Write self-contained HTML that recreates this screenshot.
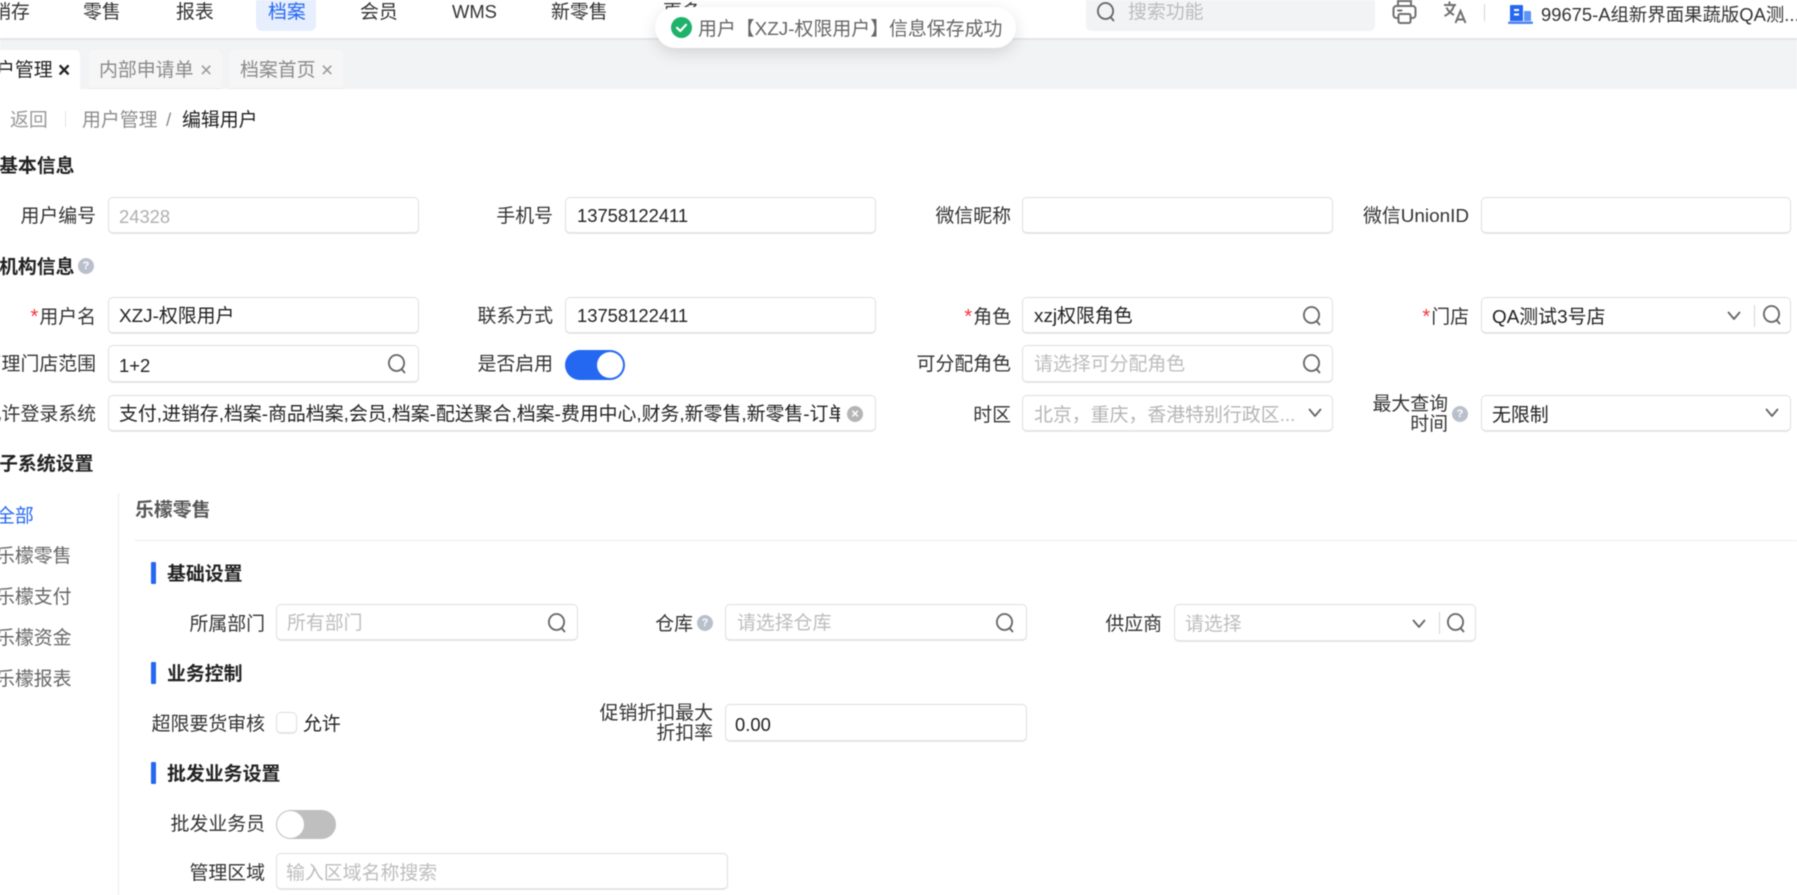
<!DOCTYPE html>
<html lang="zh"><head><meta charset="utf-8"><title>编辑用户</title>
<style>
html,body{margin:0;padding:0;background:#fff}
#p{position:relative;width:1797px;height:895px;overflow:hidden;background:#fff;font-family:"Liberation Sans","Noto Sans CJK SC",sans-serif;font-size:18.9px;color:#333;filter:blur(.4px)}
#p *{box-sizing:border-box}
.t{position:absolute;line-height:24px;height:24px;white-space:nowrap;margin-top:1px}
.r{text-align:right}
.n{font-size:18.4px;margin-top:0}
.g{color:#666}.ph{color:#bdbdbd}.b{font-weight:700;color:#222}.nav{color:#333}
.i{position:absolute;background:#fff;border:1px solid #dfdfdf;border-bottom:2px solid #e4e4e4;border-radius:5px}
.bar{position:absolute;left:151px;width:5px;background:#2468f2;border-radius:1px}
.ln{position:absolute;background:#ececec}
.s{position:absolute;width:20px;height:22px;overflow:visible}
.c{position:absolute;width:14px;height:10px;overflow:visible}
.q{position:absolute;width:16px;height:16px;border-radius:50%;background:#b9c0cc;color:#fff;font-size:11px;line-height:16px;text-align:center;font-weight:700}
.star{color:#f5333f;margin-right:1px;font-size:20px}
.tab{position:absolute;top:50px;height:39px;border-radius:5px 5px 0 0;background:#f6f6f7;border-bottom:1px solid #e9e9e9}
</style></head><body><div id="p">
<svg width="0" height="0" style="position:absolute"><defs>
<symbol id="sr" viewBox="0 0 20 22"><ellipse cx="9.500" cy="10" rx="7.600" ry="8" fill="none" stroke="#666" stroke-width="1.800"/><path d="M14.500 16L17.500 19.500" stroke="#666" stroke-width="1.800" stroke-linecap="round"/></symbol>
<symbol id="ch" viewBox="0 0 14 10"><path d="M1.500 1.500L7 8L12.500 1.500" fill="none" stroke="#666" stroke-width="1.800" stroke-linecap="round" stroke-linejoin="round"/></symbol>
</defs></svg>

<!-- header -->
<div style="position:absolute;left:0;top:0;width:1797px;height:40px;background:#fff;border-bottom:2px solid #e4e5e7"></div>
<div class="t nav" style="left:-8px;top:0">销存</div>
<div class="t nav" style="left:83px;top:0">零售</div>
<div class="t nav" style="left:176px;top:0">报表</div>
<div style="position:absolute;left:256px;top:-6px;width:60px;height:37px;background:#e7eefd;border-radius:6px"></div>
<div class="t" style="left:268px;top:0;color:#2468f2">档案</div>
<div class="t nav" style="left:360px;top:0">会员</div>
<div class="t nav n" style="left:452px;top:0">WMS</div>
<div class="t nav" style="left:551px;top:0">新零售</div>
<div class="t nav" style="left:663px;top:0">更多</div>
<div style="position:absolute;left:1086px;top:-4px;width:289px;height:35px;background:#f2f3f5;border-radius:5px"></div>
<svg class="s" style="left:1096px;top:1px"><use href="#sr"/></svg>
<div class="t ph" style="left:1128px;top:0">搜索功能</div>
<svg style="position:absolute;left:1392px;top:0;width:25px;height:24px" viewBox="0 0 25 24" fill="none" stroke="#707070" stroke-width="2"><path d="M6 6V1H19V6"/><rect x="1.500" y="6" width="22" height="12" rx="3"/><rect x="6.500" y="14" width="12" height="9" rx="1.500" fill="#fff"/><path d="M6 10.500H9.500" stroke-linecap="round"/></svg>
<svg style="position:absolute;left:1443px;top:1px;width:24px;height:23px" viewBox="0 0 24 23" fill="none" stroke="#707070" stroke-width="2"><path d="M1 4H13M6.500 0.500V4M11 4C10 9 6 13 1.500 15M3.500 6.500C5 10 8 12.500 11 14"/><path d="M12.500 22L17.500 10L22.500 22M14 18.500H21"/></svg>
<div style="position:absolute;left:1484px;top:4px;width:1px;height:17px;background:#d5d5d5"></div>
<svg style="position:absolute;left:1508px;top:5px;width:25px;height:19px" viewBox="0 0 25 19"><path d="M3 0H14Q15 0 15 1V16H2V1Q2 0 3 0Z" fill="#2468f2"/><path d="M16 6H22Q23 6 23 7V16H16Z" fill="#5f93f5"/><rect x="0" y="16.500" width="25" height="2.500" rx="1" fill="#4f86f4"/><rect x="6" y="4" width="5" height="2" fill="#fff"/><rect x="6" y="8.500" width="5" height="2" fill="#fff"/></svg>
<div class="t n" style="left:1541px;top:3px">99675-A组新界面果蔬版QA测...</div>

<!-- tabs bar -->
<div style="position:absolute;left:0;top:40px;width:1797px;height:49px;background:#f2f3f5"></div>
<div class="tab" style="left:-10px;width:90px;background:#fff;border-bottom:none"></div>
<div class="t" style="left:-4px;top:58px;color:#222">户管理</div>
<div class="t" style="left:58px;top:58px;color:#222;font-size:21px;font-weight:700">×</div>
<div class="tab" style="left:89px;width:133px"></div>
<div class="t" style="left:99px;top:58px;color:#8a8a8a">内部申请单</div>
<div class="t" style="left:200px;top:58px;color:#999;font-size:21px">×</div>
<div class="tab" style="left:230px;width:113px"></div>
<div class="t" style="left:240px;top:58px;color:#8a8a8a">档案首页</div>
<div class="t" style="left:321px;top:58px;color:#999;font-size:21px">×</div>

<!-- breadcrumb -->
<div class="t" style="left:10px;top:108px;color:#999">返回</div>
<div style="position:absolute;left:65px;top:111px;width:1px;height:16px;background:#e3e3e3"></div>
<div class="t" style="left:82px;top:108px;color:#8c8c8c">用户管理</div>
<div class="t" style="left:166px;top:108px;color:#8c8c8c">/</div>
<div class="t" style="left:182px;top:108px;color:#222">编辑用户</div>

<!-- 基本信息 -->
<div class="t b" style="left:-1px;top:154px">基本信息</div>
<div class="t r" style="right:1701px;top:204px">用户编号</div>
<div class="i" style="left:108px;top:197px;width:311px;height:37px"></div>
<div class="t n" style="left:119px;top:205px;color:#b0b0b0">24328</div>
<div class="t r" style="right:1244px;top:204px">手机号</div>
<div class="i" style="left:565px;top:197px;width:311px;height:37px"></div>
<div class="t n" style="left:577px;top:204px;color:#222">13758122411</div>
<div class="t r" style="right:786px;top:204px">微信昵称</div>
<div class="i" style="left:1022px;top:197px;width:311px;height:37px"></div>
<div class="t r" style="right:328px;top:204px">微信UnionID</div>
<div class="i" style="left:1481px;top:197px;width:310px;height:37px"></div>

<!-- 机构信息 -->
<div class="t b" style="left:-1px;top:255px">机构信息</div>
<div class="q" style="left:78px;top:258px">?</div>

<div class="t r" style="right:1701px;top:304px"><span class="star">*</span>用户名</div>
<div class="i" style="left:108px;top:297px;width:311px;height:37px"></div>
<div class="t" style="left:119px;top:304px;color:#222">XZJ-权限用户</div>
<div class="t r" style="right:1244px;top:304px">联系方式</div>
<div class="i" style="left:565px;top:297px;width:311px;height:37px"></div>
<div class="t n" style="left:577px;top:304px;color:#222">13758122411</div>
<div class="t r" style="right:786px;top:304px"><span class="star">*</span>角色</div>
<div class="i" style="left:1022px;top:297px;width:311px;height:37px"></div>
<div class="t" style="left:1034px;top:304px;color:#222">xzj权限角色</div>
<svg class="s" style="left:1302px;top:305px"><use href="#sr"/></svg>
<div class="t r" style="right:328px;top:304px"><span class="star">*</span>门店</div>
<div class="i" style="left:1481px;top:297px;width:310px;height:37px"></div>
<div class="t" style="left:1492px;top:305px;color:#222">QA测试3号店</div>
<svg class="c" style="left:1727px;top:311px"><use href="#ch"/></svg>
<div style="position:absolute;left:1754px;top:305px;width:1px;height:22px;background:#d5d5d5"></div>
<svg class="s" style="left:1762px;top:304px"><use href="#sr"/></svg>

<div class="t r" style="right:1701px;top:352px">管理门店范围</div>
<div class="i" style="left:108px;top:345px;width:311px;height:38px"></div>
<div class="t n" style="left:119px;top:354px;color:#222">1+2</div>
<svg class="s" style="left:387px;top:353px"><use href="#sr"/></svg>
<div class="t r" style="right:1244px;top:352px">是否启用</div>
<div style="position:absolute;left:565px;top:350px;width:60px;height:30px;border-radius:15px;background:#2468f2"></div>
<div style="position:absolute;left:597px;top:352px;width:26px;height:26px;border-radius:50%;background:#fff"></div>
<div class="t r" style="right:786px;top:352px">可分配角色</div>
<div class="i" style="left:1022px;top:345px;width:311px;height:38px"></div>
<div class="t ph" style="left:1034px;top:352px">请选择可分配角色</div>
<svg class="s" style="left:1302px;top:353px"><use href="#sr"/></svg>

<div class="t r" style="right:1701px;top:402px">允许登录系统</div>
<div class="i" style="left:108px;top:395px;width:768px;height:37px"></div>
<div class="t" style="left:119px;top:402px;width:721px;overflow:hidden;color:#222">支付,进销存,档案-商品档案,会员,档案-配送聚合,档案-费用中心,财务,新零售,新零售-订单</div>
<div style="position:absolute;left:847px;top:406px;width:16px;height:16px;border-radius:50%;background:#b5b5b5;color:#fff;font-size:13px;line-height:15px;text-align:center;font-weight:700">×</div>
<div class="t r" style="right:786px;top:403px">时区</div>
<div class="i" style="left:1022px;top:395px;width:311px;height:37px"></div>
<div class="t ph" style="left:1034px;top:403px;color:#b5b5b5">北京，重庆，香港特别行政区...</div>
<svg class="c" style="left:1308px;top:408px"><use href="#ch"/></svg>
<div class="t r" style="right:349px;top:394px;line-height:19px;height:19px">最大查询</div>
<div class="t r" style="right:349px;top:414px;line-height:19px;height:19px">时间</div>
<div class="q" style="left:1452px;top:406px">?</div>
<div class="i" style="left:1481px;top:395px;width:310px;height:37px"></div>
<div class="t" style="left:1492px;top:403px;color:#222">无限制</div>
<svg class="c" style="left:1765px;top:408px"><use href="#ch"/></svg>

<!-- 子系统设置 -->
<div class="t b" style="left:-1px;top:452px">子系统设置</div>
<div class="t" style="left:-4px;top:504px;color:#2468f2">全部</div>
<div class="t g" style="left:-4px;top:544px">乐檬零售</div>
<div class="t g" style="left:-4px;top:585px">乐檬支付</div>
<div class="t g" style="left:-4px;top:626px">乐檬资金</div>
<div class="t g" style="left:-4px;top:667px">乐檬报表</div>
<div class="ln" style="left:118px;top:493px;width:1px;height:402px"></div>
<div class="t" style="left:135px;top:498px;color:#555;font-weight:700;">乐檬零售</div>
<div class="ln" style="left:135px;top:540px;width:1662px;height:1px"></div>

<div class="bar" style="top:562px;height:22px"></div>
<div class="t b" style="left:167px;top:562px">基础设置</div>
<div class="t r" style="right:1532px;top:612px">所属部门</div>
<div class="i" style="left:276px;top:604px;width:302px;height:37px"></div>
<div class="t ph" style="left:287px;top:611px">所有部门</div>
<svg class="s" style="left:547px;top:612px"><use href="#sr"/></svg>
<div class="t r" style="right:1104px;top:612px">仓库</div>
<div class="q" style="left:697px;top:615px">?</div>
<div class="i" style="left:725px;top:604px;width:302px;height:37px"></div>
<div class="t ph" style="left:737px;top:611px">请选择仓库</div>
<svg class="s" style="left:995px;top:612px"><use href="#sr"/></svg>
<div class="t r" style="right:635px;top:612px">供应商</div>
<div class="i" style="left:1174px;top:604px;width:302px;height:38px"></div>
<div class="t ph" style="left:1185px;top:612px">请选择</div>
<svg class="c" style="left:1412px;top:619px"><use href="#ch"/></svg>
<div style="position:absolute;left:1439px;top:612px;width:1px;height:22px;background:#d5d5d5"></div>
<svg class="s" style="left:1446px;top:612px"><use href="#sr"/></svg>

<div class="bar" style="top:662px;height:22px"></div>
<div class="t b" style="left:167px;top:662px">业务控制</div>
<div class="t r" style="right:1532px;top:712px">超限要货审核</div>
<div class="i" style="left:276px;top:712px;width:21px;height:22px"></div>
<div class="t" style="left:303px;top:712px;color:#222">允许</div>
<div class="t r" style="right:1084px;top:703px;line-height:20px;height:20px">促销折扣最大</div>
<div class="t r" style="right:1084px;top:723px;line-height:20px;height:20px">折扣率</div>
<div class="i" style="left:725px;top:704px;width:302px;height:38px"></div>
<div class="t n" style="left:735px;top:713px;color:#222">0.00</div>

<div class="bar" style="top:762px;height:22px"></div>
<div class="t b" style="left:167px;top:762px">批发业务设置</div>
<div class="t r" style="right:1532px;top:812px">批发业务员</div>
<div style="position:absolute;left:276px;top:810px;width:60px;height:29px;border-radius:15px;background:#bfbfbf"></div>
<div style="position:absolute;left:277px;top:811px;width:27px;height:27px;border-radius:50%;background:#fff"></div>
<div class="t r" style="right:1532px;top:861px">管理区域</div>
<div class="i" style="left:276px;top:853px;width:452px;height:37px"></div>
<div class="t ph" style="left:286px;top:861px">输入区域名称搜索</div>

<!-- toast -->
<div style="position:absolute;left:655px;top:7px;width:361px;height:41px;background:#fff;border-radius:21px;box-shadow:0 5px 16px rgba(0,0,0,.13)"></div>
<svg style="position:absolute;left:671px;top:17px;width:21px;height:21px" viewBox="0 0 21 21"><circle cx="10.500" cy="10.500" r="10.500" fill="#1fb26b"/><path d="M6 10.800L9.300 14L15 7.800" fill="none" stroke="#fff" stroke-width="2.200" stroke-linecap="round" stroke-linejoin="round"/></svg>
<div class="t" style="left:698px;top:17px;color:#666">用户【XZJ-权限用户】信息保存成功</div>
</div></body></html>
